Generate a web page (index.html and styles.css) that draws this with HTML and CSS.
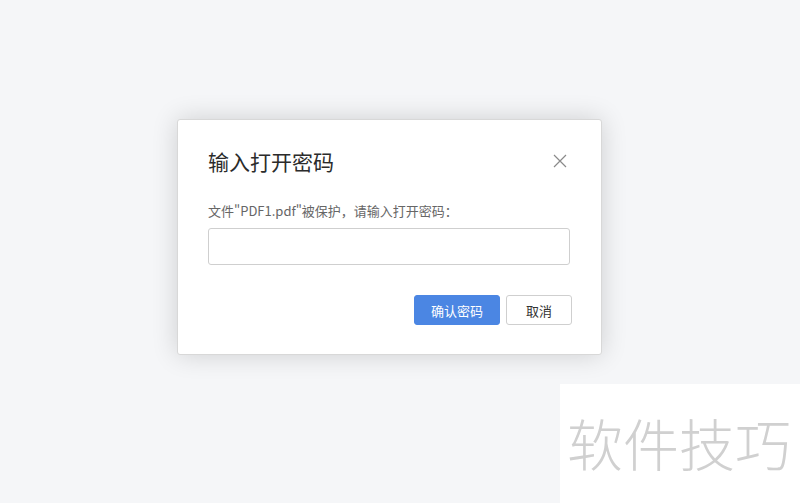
FILE: index.html
```html
<!DOCTYPE html>
<html lang="zh">
<head>
<meta charset="utf-8">
<title>输入打开密码</title>
<link rel="stylesheet" href="styles.css">
</head>
<body>
<div class="stage">
  <div class="dialog">
    <div class="dialog-head">
      <h1 class="dialog-title">输入打开密码</h1>
      <button class="close" aria-label="关闭">
        <svg width="14" height="14" viewBox="0 0 14 14"><path d="M1 1 L13 13 M13 1 L1 13" stroke="#8a8a8a" stroke-width="1.2" fill="none"/></svg>
      </button>
    </div>
    <p class="dialog-label">文件"PDF1.pdf"被保护，请输入打开密码：</p>
    <input class="dialog-input" type="password">
    <div class="dialog-actions">
      <button class="btn btn-primary">确认密码</button>
      <button class="btn btn-default">取消</button>
    </div>
  </div>
</div>
<div class="watermark">软件技巧</div>
</body>
</html>
```
FILE: styles.css
```css
html, body {
  margin: 0;
  padding: 0;
  height: 100%;
}
body {
  background: #f5f6f8;
  font-family: "Noto Sans CJK SC", "Noto Sans", sans-serif;
  overflow: hidden;
}
.stage {
  padding: 119px 0 0 177px;
}
.dialog {
  width: 425px;
  height: 236px;
  box-sizing: border-box;
  background: #fff;
  border: 1px solid #d8d8d8;
  border-radius: 3px;
  box-shadow: 0 0 26px rgba(0, 0, 0, 0.16);
  padding: 26px 29px 0 30px;
  display: flex;
  flex-direction: column;
}
.dialog-head {
  display: flex;
  align-items: center;
  justify-content: space-between;
  height: 30px;
}
.dialog-title {
  margin: 0;
  font-size: 21px;
  font-weight: 400;
  color: #2b2b2b;
  line-height: 30px;
}
.close {
  border: 0;
  background: none;
  padding: 0;
  width: 14px;
  height: 14px;
  margin-right: 5px;
  display: flex;
}
.dialog-label {
  margin: 26px 0 0;
  font-size: 13px;
  line-height: 18px;
  color: #666;
}
.dialog-input {
  margin-top: 8px;
  width: 362px;
  height: 37px;
  box-sizing: border-box;
  border: 1px solid #cfcfcf;
  border-radius: 3px;
  background: #fff;
  outline: none;
}
.dialog-actions {
  margin-top: 30px;
  display: flex;
  justify-content: flex-end;
  gap: 6px;
}
.btn {
  height: 30px;
  box-sizing: border-box;
  border-radius: 3px;
  font-family: "Noto Sans CJK SC", sans-serif;
  font-size: 13px;
  padding: 0;
}
.btn-primary {
  width: 86px;
  background: #4b86e3;
  border: 1px solid #4b86e3;
  color: #fff;
}
.btn-default {
  width: 66px;
  background: #fff;
  border: 1px solid #cfcfcf;
  color: #333;
}
.watermark {
  position: absolute;
  left: 560px;
  top: 384px;
  width: 240px;
  height: 119px;
  background: #fff;
  color: #d0d0d0;
  font-size: 56px;
  line-height: 115px;
  padding-left: 7px;
  box-sizing: border-box;
  white-space: nowrap;
  font-family: "Noto Sans CJK SC", sans-serif;
  font-weight: 300;
}
```
